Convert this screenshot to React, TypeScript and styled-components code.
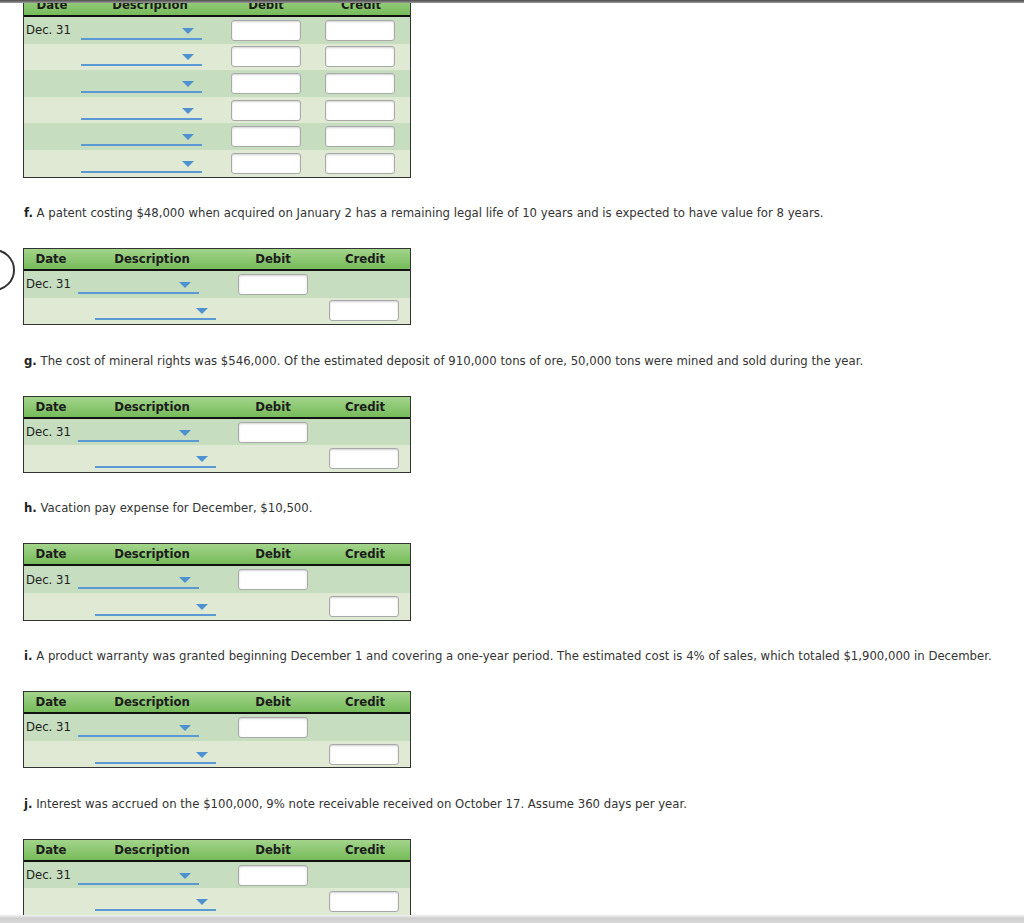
import React from "react";
import styled, { createGlobalStyle } from "styled-components";

const GlobalStyle = createGlobalStyle`
  html, body {
    margin: 0;
    padding: 0;
    background: #ffffff;
  }
  body {
    font-family: "DejaVu Sans", Verdana, sans-serif;
    font-size: 11.7px;
    color: #222;
    overflow: hidden;
  }
`;

const TopShade = styled.div`
  position: fixed;
  top: 0;
  left: 0;
  right: 0;
  height: 3px;
  background: linear-gradient(#4a4a4a, #9a9a9a);
  z-index: 5;
`;

const BottomShade = styled.div`
  position: fixed;
  left: 0;
  right: 0;
  bottom: 0;
  height: 8px;
  background: linear-gradient(#f2f2f2, #cfcfcf 40%, #d8d8d8);
  z-index: 5;
`;

const Page = styled.div`
  display: flex;
  flex-direction: column;
  padding: 0 0 40px 23px;
  margin-top: -6px;
`;

const Prompt = styled.p`
  margin: 27.5px 0 27px 1px;
  line-height: 16px;
  color: #333;
  white-space: nowrap;
  b {
    color: #222;
  }
`;

const Table = styled.div`
  position: relative;
  width: 386px;
  border: 1px solid #333;
`;

const Header = styled.div<{ $cols: string }>`
  display: grid;
  grid-template-columns: ${(p) => p.$cols};
  height: 20px;
  align-items: center;
  background: linear-gradient(#a3d48b, #76bb5a);
  border-bottom: 2px solid #111;
  font-weight: bold;
  color: #1c1c1c;
  text-align: center;
`;

const Row = styled.div<{ $cols: string; $alt: boolean }>`
  display: grid;
  grid-template-columns: ${(p) => p.$cols};
  height: 26.6px;
  align-items: center;
  background: ${(p) => (p.$alt ? "#dfe9d3" : "#c6ddbf")};
`;

const DateCell = styled.div`
  padding-left: 2px;
  color: #222;
  white-space: nowrap;
`;

const Cell = styled.div<{ $shift?: number }>`
  display: flex;
  justify-content: center;
  padding-right: ${(p) => p.$shift ?? 0}px;
`;

const DescCell = styled.div<{ $indent: number }>`
  display: flex;
  padding-left: ${(p) => p.$indent}px;
  overflow: visible;
`;

const Dropdown = styled.div`
  position: relative;
  flex: 0 0 auto;
  width: 121px;
  height: 17px;
  border-bottom: 2px solid #5a99d4;
`;

const Arrow = styled.span`
  position: absolute;
  right: 8px;
  top: 7px;
  width: 0;
  height: 0;
  border-left: 6px solid transparent;
  border-right: 6px solid transparent;
  border-top: 6px solid #4e91d0;
`;

const Input = styled.div`
  width: 68px;
  height: 19px;
  background: #fff;
  border: 1px solid #a9a9a9;
  border-radius: 3px;
  box-shadow: inset 0 1px 2px rgba(0, 0, 0, 0.18);
`;

const Ring = styled.div`
  position: absolute;
  left: -51px;
  top: 0px;
  width: 38px;
  height: 38px;
  border: 2px solid #333;
  border-radius: 50%;
`;

type Line = { indent: number; debit: boolean; credit: boolean };

const TOP_COLS = "56px 140px 92px 98px";
const COLS = "54px 148px 94px 90px";

const topLines: Line[] = Array.from({ length: 6 }, () => ({
  indent: 1,
  debit: true,
  credit: true,
}));

const pairLines: Line[] = [
  { indent: 0, debit: true, credit: false },
  { indent: 17, debit: false, credit: true },
];

const Journal = ({
  cols,
  lines,
  ring,
  creditShift = 0,
}: {
  cols: string;
  lines: Line[];
  ring?: boolean;
  creditShift?: number;
}) => (
  <Table>
    {ring && <Ring />}
    <Header $cols={cols}>
      <div>Date</div>
      <div>Description</div>
      <div>Debit</div>
      <div>Credit</div>
    </Header>
    {lines.map((l, i) => (
      <Row key={i} $cols={cols} $alt={i % 2 === 1}>
        <DateCell>{i === 0 ? "Dec. 31" : ""}</DateCell>
        <DescCell $indent={l.indent}>
          <Dropdown>
            <Arrow />
          </Dropdown>
        </DescCell>
        <Cell>{l.debit && <Input />}</Cell>
        <Cell $shift={creditShift}>{l.credit && <Input />}</Cell>
      </Row>
    ))}
  </Table>
);

const prompts = [
  {
    letter: "f.",
    text: " A patent costing $48,000 when acquired on January 2 has a remaining legal life of 10 years and is expected to have value for 8 years.",
  },
  {
    letter: "g.",
    text: " The cost of mineral rights was $546,000. Of the estimated deposit of 910,000 tons of ore, 50,000 tons were mined and sold during the year.",
  },
  {
    letter: "h.",
    text: " Vacation pay expense for December, $10,500.",
  },
  {
    letter: "i.",
    text: " A product warranty was granted beginning December 1 and covering a one-year period. The estimated cost is 4% of sales, which totaled $1,900,000 in December.",
  },
  {
    letter: "j.",
    text: " Interest was accrued on the $100,000, 9% note receivable received on October 17. Assume 360 days per year.",
  },
];

export default function App() {
  return (
    <>
      <GlobalStyle />
      <TopShade />
      <Page>
        <Journal cols={TOP_COLS} lines={topLines} creditShift={3} />
        {prompts.map((p, i) => (
          <React.Fragment key={p.letter}>
            <Prompt>
              <b>{p.letter}</b>
              {p.text}
            </Prompt>
            <Journal
              cols={COLS}
              lines={pairLines}
              ring={i === 0}
              creditShift={3}
            />
          </React.Fragment>
        ))}
      </Page>
      <BottomShade />
    </>
  );
}
